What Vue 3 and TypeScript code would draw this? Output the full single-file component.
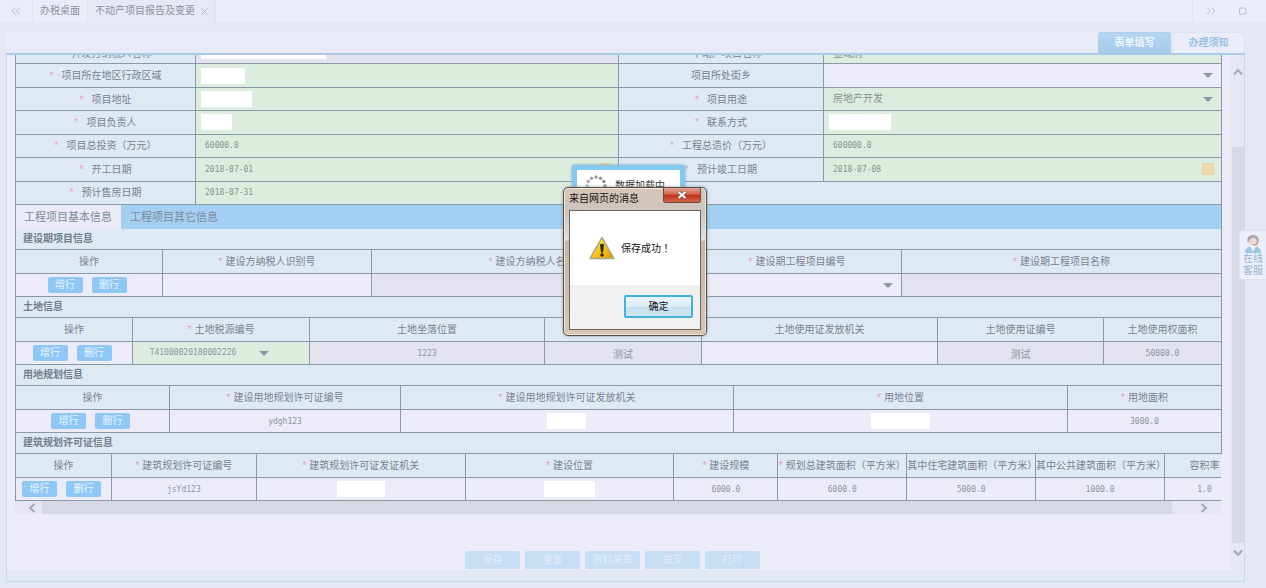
<script setup lang="ts">
interface Field {
  label: string
  kind: 'text' | 'select' | 'date' | 'masked' | 'none'
  value?: string
  required?: boolean
  tone?: 'green' | 'grey' | 'plain' | 'blue'
  mask?: number
}
interface Column {
  title: string
  width: number
  required?: boolean
  kind: 'ops' | 'text' | 'select' | 'masked'
  value?: string
  tone?: 'green' | 'grey'
  mask?: number
}
interface Section {
  title: string
  columns: Column[]
}

const fields: Field[] = [
  { label: '开发方纳税人名称', kind: 'masked', tone: 'grey', required: true, mask: 125 },
  { label: '不动产项目名称', kind: 'text', value: '金域府', required: true, tone: 'green' },
  { label: '项目所在地区行政区域', kind: 'masked', required: true, tone: 'green', mask: 44 },
  { label: '项目所处街乡', kind: 'select', value: '', tone: 'plain' },
  { label: '项目地址', kind: 'masked', required: true, tone: 'green', mask: 51 },
  { label: '项目用途', kind: 'select', value: '房地产开发', required: true, tone: 'green' },
  { label: '项目负责人', kind: 'masked', required: true, tone: 'green', mask: 31 },
  { label: '联系方式', kind: 'masked', required: true, tone: 'green', mask: 62 },
  { label: '项目总投资（万元）', kind: 'text', value: '60000.0', required: true, tone: 'green' },
  { label: '工程总造价（万元）', kind: 'text', value: '600000.0', required: true, tone: 'green' },
  { label: '开工日期', kind: 'date', value: '2018-07-01', required: true, tone: 'green' },
  { label: '预计竣工日期', kind: 'date', value: '2018-07-08', required: true, tone: 'green' },
  { label: '预计售房日期', kind: 'date', value: '2018-07-31', required: true, tone: 'green' },
]

const sections: Section[] = [
  {
    title: '建设期项目信息',
    columns: [
      { title: '操作', width: 147, kind: 'ops' },
      { title: '建设方纳税人识别号', width: 209, required: true, kind: 'text' },
      { title: '建设方纳税人名称', width: 321, required: true, kind: 'text', tone: 'grey' },
      { title: '建设期工程项目编号', width: 209, required: true, kind: 'select', value: '' },
      { title: '建设期工程项目名称', width: 320, required: true, kind: 'text', tone: 'grey' },
    ],
  },
  {
    title: '土地信息',
    columns: [
      { title: '操作', width: 117, kind: 'ops' },
      { title: '土地税源编号', width: 177, required: true, kind: 'select', value: 'T41000020180002226', tone: 'green' },
      { title: '土地坐落位置', width: 235, kind: 'text', value: '1223', tone: 'grey' },
      { title: '', width: 157, kind: 'text', value: '测试', tone: 'grey' },
      { title: '土地使用证发放机关', width: 236, kind: 'text' },
      { title: '土地使用证编号', width: 166, kind: 'text', value: '测试', tone: 'grey' },
      { title: '土地使用权面积', width: 118, kind: 'text', value: '50000.0', tone: 'grey' },
    ],
  },
  {
    title: '用地规划信息',
    columns: [
      { title: '操作', width: 154, kind: 'ops' },
      { title: '建设用地规划许可证编号', width: 231, required: true, kind: 'text', value: 'ydgh123' },
      { title: '建设用地规划许可证发放机关', width: 333, required: true, kind: 'masked', mask: 39 },
      { title: '用地位置', width: 334, required: true, kind: 'masked', mask: 59 },
      { title: '用地面积', width: 154, required: true, kind: 'text', value: '3000.0' },
    ],
  },
  {
    title: '建筑规划许可证信息',
    columns: [
      { title: '操作', width: 96, kind: 'ops' },
      { title: '建筑规划许可证编号', width: 145, required: true, kind: 'text', value: 'jsYd123' },
      { title: '建筑规划许可证发证机关', width: 209, required: true, kind: 'masked', mask: 48 },
      { title: '建设位置', width: 209, required: true, kind: 'masked', mask: 51 },
      { title: '建设规模', width: 104, required: true, kind: 'text', value: '6000.0' },
      { title: '规划总建筑面积（平方米）', width: 129, required: true, kind: 'text', value: '6000.0' },
      { title: '其中住宅建筑面积（平方米）', width: 129, kind: 'text', value: '5000.0' },
      { title: '其中公共建筑面积（平方米）', width: 129, kind: 'text', value: '1000.0' },
      { title: '容积率', width: 80, kind: 'text', value: '1.0' },
    ],
  },
]

const VIEW_WIDTH = 1206
const total = (s: Section) => s.columns.reduce((sum, c) => sum + c.width, 0)
const tableWidth = (s: Section) => `${(total(s) / VIEW_WIDTH) * 100}%`
const colWidth = (s: Section, c: Column) => `${(c.width / total(s)) * 100}%`

const actions = ['保存', '重置', '资料采集', '提交', '打印']
const dots = Array.from({ length: 12 }, (_, i) => {
  const a = (i * Math.PI) / 6
  return { x: 12 + 9 * Math.sin(a), y: 12 - 9 * Math.cos(a), o: 0.35 + 0.05 * ((i + 6) % 12) }
})
</script>

<template>
  <div class="page">
    <nav class="tabbar">
      <button class="nav-btn" aria-label="向左">
        <svg width="10" height="8" viewBox="0 0 10 8"><path d="M4.5 .5 1 4l3.500 3.500M9 .5 5.500 4 9 7.500" /></svg>
      </button>
      <a class="tab first" href="#">办税桌面</a>
      <a class="tab current" href="#">不动产项目报告及变更
        <svg width="7" height="7" viewBox="0 0 7 7"><path d="M.5.5l6 6M6.500.5l-6 6" /></svg>
      </a>
      <span class="fill"></span>
      <span class="nav-right">
        <button class="nav-btn" aria-label="向右">
          <svg width="10" height="8" viewBox="0 0 10 8"><path d="M1 .5 4.500 4 1 7.500M5.500 .5 9 4 5.500 7.500" /></svg>
        </button>
        <button class="nav-btn" aria-label="最大化">
          <svg width="8" height="8" viewBox="0 0 8 8"><rect x=".5" y="1" width="6.500" height="6" rx="1" /></svg>
        </button>
      </span>
    </nav>

    <div class="frame">
      <header class="strip">
        <button class="form-tab on">表单填写</button>
        <button class="form-tab">办理须知</button>
      </header>

      <div class="panel">
        <main class="body">
          <form class="fields" @submit.prevent>
            <template v-for="(f, i) in fields" :key="f.label">
              <label class="name" :class="{ lead: i < 2 }" :for="`f${i}`"><i v-if="f.required">*</i>{{ f.label }}</label>
              <div class="value" :class="f.tone">
                <span v-if="f.kind === 'masked'" class="mask" :class="{ low: i === 0 }" :style="{ width: f.mask + 'px' }"></span>
                <select v-else-if="f.kind === 'select'" :id="`f${i}`" :class="{ cjk: f.value }">
                  <option>{{ f.value }}</option>
                </select>
                <input v-else :id="`f${i}`" type="text" :value="f.value" :class="{ cjk: i === 1 }" />
                <svg v-if="f.kind === 'select'" class="caret" width="10" height="5" viewBox="0 0 10 5"><path d="M0 0h10L5 5z" /></svg>
                <svg v-if="f.kind === 'date'" class="cal" width="12" height="12" viewBox="0 0 12 12">
                  <rect width="12" height="12" rx="1" fill="#edd3a4" />
                  <path d="M1 3.500h10M4 4v7M8 4v7" stroke="#f1e3c4" stroke-width="1" />
                </svg>
              </div>
            </template>
            <div class="rest"></div>
          </form>

          <div class="subtabs">
            <button class="subtab on">工程项目基本信息</button>
            <button class="subtab">工程项目其它信息</button>
          </div>

          <section v-for="(s, n) in sections" :key="s.title">
            <h2>{{ s.title }}</h2>
            <div class="clip" :class="{ open: n === 3 }">
              <table :style="{ width: tableWidth(s) }">
                <colgroup>
                  <col v-for="(c, k) in s.columns" :key="k" :style="{ width: colWidth(s, c) }" />
                </colgroup>
                <thead>
                  <tr>
                    <th v-for="(c, k) in s.columns" :key="k"><i v-if="c.required">*</i>{{ c.title }}</th>
                  </tr>
                </thead>
                <tbody>
                  <tr>
                    <td v-for="(c, k) in s.columns" :key="k" :class="c.tone">
                      <div class="cell" :class="c.kind">
                        <template v-if="c.kind === 'ops'">
                          <button class="op">增行</button>
                          <button class="op">删行</button>
                        </template>
                        <span v-else-if="c.kind === 'masked'" class="mask" :style="{ width: c.mask + 'px' }"></span>
                        <template v-else-if="c.kind === 'select'">
                          <select :aria-label="c.title" :class="{ filled: c.value }">
                            <option>{{ c.value }}</option>
                          </select>
                          <svg class="caret" :class="{ near: c.value }" width="10" height="5" viewBox="0 0 10 5"><path d="M0 0h10L5 5z" /></svg>
                        </template>
                        <input v-else type="text" :aria-label="c.title || '土地信息'" :value="c.value" :class="{ cjk: c.value === '测试' }" />
                      </div>
                    </td>
                  </tr>
                </tbody>
              </table>
            </div>
          </section>

          <div class="hscroll">
            <svg width="8" height="10" viewBox="0 0 8 10"><path d="M6.500 1 2 5l4.500 4" /></svg>
            <span class="hthumb"></span>
            <svg width="8" height="10" viewBox="0 0 8 10"><path d="M1.500 1 6 5 1.500 9" /></svg>
          </div>

          <div class="actions">
            <button v-for="a in actions" :key="a">{{ a }}</button>
          </div>
        </main>

        <div class="vscroll">
          <svg width="10" height="8" viewBox="0 0 10 8"><path d="M1 6.500 5 2l4 4.500" /></svg>
          <span class="vtrack"><span class="vthumb"></span></span>
          <svg width="10" height="8" viewBox="0 0 10 8"><path d="M1 1.500 5 6l4-4.500" /></svg>
        </div>
      </div>
    </div>

    <a class="service" href="#">
      <svg width="18" height="19" viewBox="0 0 18 19">
        <path d="M1 19c0-4 2-6 5-6.500l3 4 3-4c3 .5 5 2.500 5 6.500z" fill="#9cc8e4" />
        <path d="M6.500 12h5l-2.500 6z" fill="#f5f5fb" />
        <circle cx="9" cy="7" r="5" fill="#ecd8d3" />
        <path d="M3.500 8C2.500 3 5.500 1 9 1s6.500 2 5.500 7l-1.500 0c0-3-2-4-4-4.500C7 4.500 5.500 5 5 8z" fill="#aaa5ae" />
        <path d="M13.500 8c0 2-1.500 3-4 3" fill="none" stroke="#c58d8d" stroke-width="1.300" />
      </svg>
      <span>在线</span><span>客服</span>
    </a>

    <div class="loading">
      <svg width="24" height="24" viewBox="0 0 24 24">
        <circle v-for="(d, k) in dots" :key="k" :cx="d.x" :cy="d.y" r="1.700" fill="#666" :opacity="d.o" />
      </svg>
      数据加载中
    </div>

    <div class="dialog" role="alertdialog" aria-labelledby="dlg-title">
      <div class="dlg-head">
        <span id="dlg-title">来自网页的消息</span>
        <button class="close" aria-label="关闭">
          <svg width="10" height="8" viewBox="0 0 10 8">
            <path d="M1.500 1l7 6M8.500 1l-7 6" stroke="#7b4a45" stroke-width="3.200" />
            <path d="M1.500 1l7 6M8.500 1l-7 6" stroke="#fff" stroke-width="2" />
          </svg>
        </button>
      </div>
      <div class="dlg-box">
        <div class="dlg-msg">
          <svg width="26" height="24" viewBox="0 0 26 24">
            <defs>
              <linearGradient id="warn" x1="0" y1="0" x2="1" y2="1">
                <stop offset="0" stop-color="#fff05a" /><stop offset=".5" stop-color="#f6cb12" /><stop offset="1" stop-color="#dc9608" />
              </linearGradient>
            </defs>
            <path d="M13 1.500 25 22.500H1z" fill="url(#warn)" stroke="#a9a48e" stroke-width="1.500" stroke-linejoin="round" />
            <path d="M11 8.500q2-1.500 4 0l-1 8h-2z" fill="#2b2508" />
            <circle cx="13" cy="19" r="1.700" fill="#2b2508" />
          </svg>
          保存成功！
        </div>
        <div class="dlg-foot"><button class="ok">确定</button></div>
      </div>
    </div>
  </div>
</template>

<style>
body {
  margin: 0;
}
</style>

<style scoped>
.page {
  position: relative;
  box-sizing: border-box;
  min-height: 100vh;
  display: flex;
  flex-direction: column;
  overflow: hidden;
  background: #e4e8f3;
  color: #7a8192;
  font-family: "Liberation Sans", "Noto Sans CJK SC", sans-serif;
  font-size: 10px;
  line-height: 14px;
}
.page *,
.page *::before {
  box-sizing: border-box;
}
button,
input,
select {
  font: inherit;
  color: inherit;
  border: 0;
  padding: 0;
  margin: 0;
  background: none;
  border-radius: 0;
}
a {
  color: inherit;
  text-decoration: none;
}
svg {
  display: block;
  flex: none;
}

/* top tab bar */
.tabbar {
  display: flex;
  height: 22px;
  background: #eaecf8;
}
.nav-btn {
  width: 32px;
  display: flex;
  align-items: center;
  justify-content: center;
}
.nav-btn svg,
.tab svg {
  fill: none;
  stroke: #b9bdca;
}
.tab {
  display: flex;
  align-items: center;
  padding: 0 7px;
  color: #8b909f;
  border-left: 1px solid #e0e3ee;
}
.tab.current {
  gap: 6px;
  background: #e6e9f4;
  border-right: 1px solid #e0e3ee;
}
.fill {
  flex: 1;
}
.nav-right {
  display: flex;
  padding: 0 7px 0 2px;
  border-left: 1px solid #e0e3ee;
}

/* framed area */
.frame {
  flex: 1;
  display: flex;
  flex-direction: column;
  margin: 10px 21px 6px 6px;
}
.strip {
  display: flex;
  justify-content: flex-end;
  gap: 1px;
  height: 23px;
  background: #e8ebf7;
  border-bottom: 2px solid #abcae9;
}
.form-tab {
  width: 73px;
  font-weight: bold;
  color: #9dc2e6;
  background: #eaecf8;
  border: 1px solid #dde3f1;
  border-bottom: 0;
  border-radius: 3px 3px 0 0;
}
.form-tab.on {
  color: #f0f6fd;
  background: linear-gradient(#b6d5f0, #a5cbec);
  border-color: #b0d1ee;
}
.panel {
  flex: 1;
  display: flex;
  padding-bottom: 11px;
  border: 1px solid #c6d8eb;
  border-top: 0;
}
.body {
  flex: 1;
  min-width: 0;
  overflow: hidden;
  padding: 0 9px 0 8px;
  background: #ebecf8;
}

/* property form, scrolled down by part of a row */
.fields {
  display: grid;
  grid-template-columns: 180fr 423fr 205fr 398fr;
  grid-template-rows: repeat(7, 1fr);
  height: 164px;
  margin-top: -14px;
  border-left: 1px solid #8b98a7;
}
.name,
.value,
.rest {
  min-height: 0;
  display: flex;
  align-items: center;
  border-right: 1px solid #8b98a7;
  border-bottom: 1px solid #8b98a7;
}
.name {
  justify-content: center;
  padding-top: 1px;
  background: #dee9f4;
}
.name.lead {
  padding-top: 4px;
}
.rest {
  grid-column: 3 / 5;
  background: #dee9f4;
}
i {
  font-style: normal;
  color: #e9a0b4;
}
.name i {
  margin-right: 8px;
}
th i {
  margin-right: 3px;
}
.value {
  min-width: 0;
  gap: 8px;
  padding: 0 7px 0 5px;
  background: #ebecf8;
}
.green,
.value.green {
  background: #dcecdf;
}
.grey,
.value.grey {
  background: #e2e3ee;
}
.value input,
.value select {
  flex: 1;
  min-width: 0;
  height: 20px;
  padding-left: 4px;
  color: #8a918f;
  font-family: "DejaVu Sans Mono", "Noto Sans CJK SC", monospace;
  font-size: 8px;
  appearance: none;
}
.page .cjk {
  font-family: "Liberation Sans", "Noto Sans CJK SC", sans-serif;
  font-size: 10px;
}
.mask {
  height: 16px;
  background: #fff;
}
.mask.low {
  align-self: flex-end;
  margin-bottom: 4px;
}
.caret {
  fill: #8e96a4;
}
.value .caret {
  margin-right: 1px;
}

/* sub tabs */
.subtabs {
  display: flex;
  height: 24px;
  background: #a3cff2;
  border-left: 1px solid #8b98a7;
  border-right: 1px solid #8b98a7;
}
.subtab {
  padding: 0 9px;
  font-size: 11px;
  color: #7c8a9c;
}
.subtab.on {
  padding-left: 8px;
  background: #ebebf7;
}

/* sections */
h2 {
  height: 21px;
  margin: 0;
  padding-left: 7px;
  font-size: 10px;
  line-height: 20px;
  font-weight: bold;
  color: #747c8c;
  background: #dfe9f4;
  border: solid #8b98a7;
  border-width: 0 1px 1px 1px;
}
.clip {
  overflow: hidden;
  border-left: 1px solid #8b98a7;
}
.clip.open {
  margin-right: 1px;
}
table {
  table-layout: fixed;
  border-collapse: separate;
  border-spacing: 0;
}
th,
td {
  padding: 0;
  border-right: 1px solid #8b98a7;
  border-bottom: 1px solid #8b98a7;
}
th {
  height: 24px;
  font-weight: normal;
  white-space: nowrap;
  background: #dfe9f4;
}
td {
  height: 23px;
}
.cell {
  height: 22px;
  display: flex;
  align-items: center;
  justify-content: center;
}
.cell.ops {
  gap: 9px;
  padding-right: 4px;
}
.op {
  width: 35px;
  height: 16px;
  line-height: 16px;
  color: #e9f4fe;
  background: #8fc8f7;
  border-radius: 2px;
}
.cell input,
.cell select {
  width: 100%;
  min-width: 0;
  height: 20px;
  text-align: center;
  color: #8d93a0;
  font-family: "DejaVu Sans Mono", "Noto Sans CJK SC", monospace;
  font-size: 8px;
  appearance: none;
}
.cell select {
  flex: 1;
}
.cell select.filled {
  flex: none;
  width: 96px;
}
.cell .caret {
  margin-right: 8px;
}
.cell .caret.near {
  margin: 0 28px 0 18px;
}

/* scroll bars */
.hscroll {
  display: flex;
  align-items: center;
  height: 13px;
  margin-right: 1px;
  padding: 0 13px;
  gap: 6px;
  background: #e5e6f1;
}
.hscroll svg,
.vscroll svg {
  fill: none;
  stroke: #a5a8b4;
  stroke-width: 2;
}
.hthumb {
  flex: 1;
  height: 13px;
  margin-right: 22px;
  background: #d6d8e4;
}
.vscroll {
  width: 13px;
  display: flex;
  flex-direction: column;
  align-items: center;
  gap: 6px;
  padding: 13px 0;
  background: #e5e8f3;
}
.vtrack {
  flex: 1;
  width: 12px;
  display: flex;
  flex-direction: column;
  justify-content: flex-end;
}
.vthumb {
  height: 86%;
  background: #d6d9e6;
}

.actions {
  display: flex;
  justify-content: center;
  gap: 5px;
  margin-top: 37px;
  padding-right: 12px;
}
.actions button {
  width: 55px;
  height: 18px;
  color: #e2ecf8;
  background: #c5def4;
  border-radius: 2px;
}

/* overlays */
.service {
  position: absolute;
  right: 0;
  top: 230px;
  display: flex;
  flex-direction: column;
  align-items: center;
  width: 27px;
  padding: 3px 0 2px;
  line-height: 12px;
  color: #93b5d6;
  background: #eceef9;
  border: 1px solid #dfe3f0;
  border-right: 0;
  border-radius: 3px 0 0 3px;
}
.loading {
  position: absolute;
  left: calc(50% - 61px);
  top: 165px;
  display: flex;
  align-items: center;
  gap: 7px;
  width: 113px;
  height: 42px;
  padding-left: 7px;
  white-space: nowrap;
  color: #333;
  background: #fff;
  border: 5px solid #83caf0;
  border-radius: 2px;
  box-shadow: 0 0 3px #7d9db5;
}
.dialog {
  position: absolute;
  left: calc(50% - 70px);
  top: 187px;
  width: 144px;
  padding: 0 5px 5px;
  color: #111;
  background: linear-gradient(#d6c6b9, #cdc4bd 24px, #e4dfdb 52px, #c6b5a5 53px, #d8c5b2);
  border: 1px solid #574f49;
  border-radius: 5px;
  box-shadow: 0 0 3px #8a8f98, inset 0 0 0 1px #efe6de;
}
.dlg-head {
  display: flex;
  justify-content: space-between;
  height: 22px;
  line-height: 22px;
}
.close {
  display: flex;
  align-items: center;
  justify-content: center;
  width: 38px;
  height: 15px;
  background: linear-gradient(#e3a495, #d2654f 45%, #bd2e16 50%, #d2654a);
  border: 1px solid #71463e;
  border-top: 0;
  border-radius: 0 0 3px 3px;
}
.dlg-box {
  background: #f0f0f0;
  border: 1px solid #6d655f;
}
.dlg-msg {
  display: flex;
  align-items: center;
  gap: 6px;
  height: 74px;
  padding-left: 19px;
  font-family: "Noto Sans CJK TC", sans-serif;
  background: #fff;
}
.dlg-foot {
  display: flex;
  justify-content: flex-end;
  padding: 10px 7px 11px;
}
.ok {
  width: 69px;
  height: 23px;
  background: linear-gradient(#eaf5fa, #dcedf5 50%, #c5e0ee 51%, #cfe6f1);
  border: 2px solid #41b3dc;
  border-radius: 2px;
}
</style>
